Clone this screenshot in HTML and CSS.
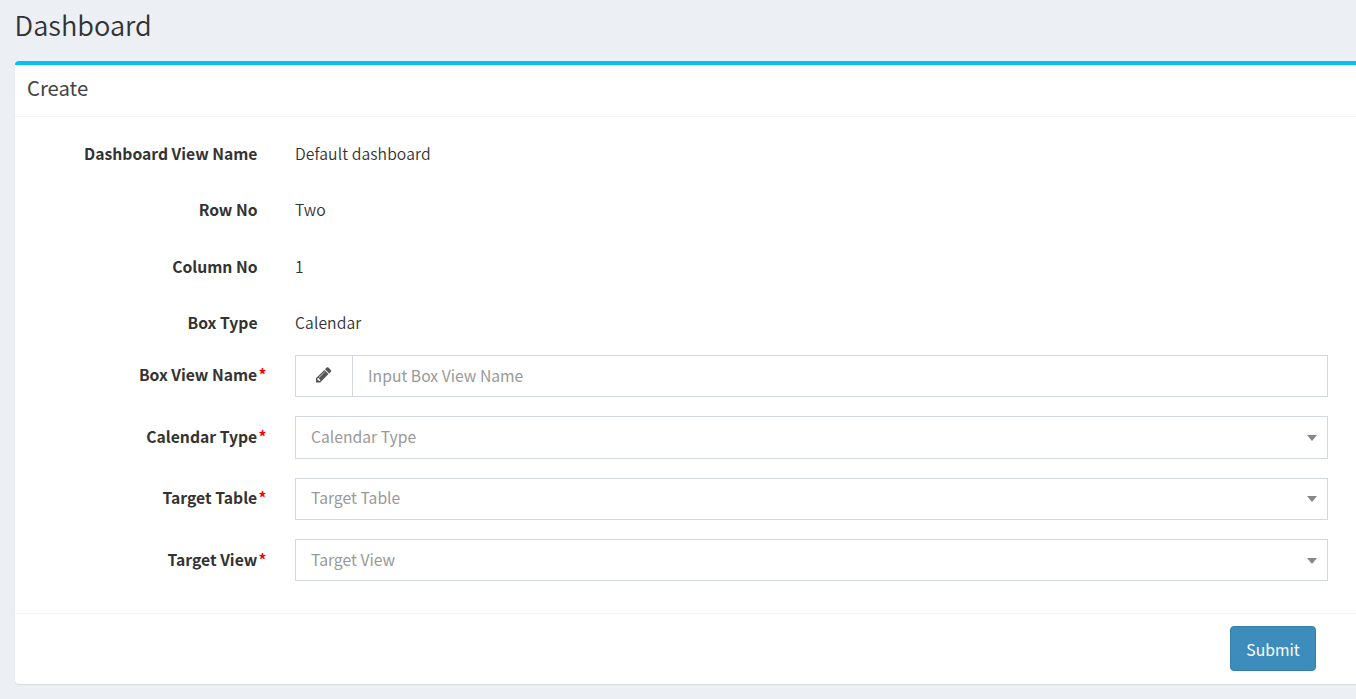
FILE: index.html
```html
<!DOCTYPE html>
<html lang="en">
<head>
<meta charset="utf-8">
<title>Dashboard</title>
<link rel="stylesheet" href="styles.css">
</head>
<body>
<h1 class="page-title">Dashboard</h1>
<main class="box">
  <header class="box-header"><h2 class="box-title">Create</h2></header>
  <form class="form">
    <div class="row static"><span class="label">Dashboard View Name</span><span class="value">Default dashboard</span></div>
    <div class="row static"><span class="label">Row No</span><span class="value">Two</span></div>
    <div class="row static"><span class="label">Column No</span><span class="value">1</span></div>
    <div class="row static"><span class="label">Box Type</span><span class="value">Calendar</span></div>
    <div class="row field">
      <label class="label required" for="name">Box View Name</label>
      <div class="group">
        <span class="addon"><svg class="pencil" viewBox="0 0 1536 1536"><path fill="currentColor" d="M363 1408l91-91-235-235-91 91v107h128v128zM886 480q0-22-22-22-10 0-17 7l-542 542q-7 7-7 17 0 22 22 22 10 0 17-7l542-542q7-7 7-17zM832 288l416 416-832 832H0v-416zM1515 384q0 53-37 90l-166 166-416-416 166-165q36-38 90-38 53 0 91 38l235 234q37 39 37 91z"/></svg></span>
        <input class="input" id="name" type="text" placeholder="Input Box View Name">
      </div>
    </div>
    <div class="row field lower">
      <span class="label required">Calendar Type</span>
      <div class="select tall"><span>Calendar Type</span><i class="caret"></i></div>
    </div>
    <div class="row field">
      <span class="label required">Target Table</span>
      <div class="select"><span>Target Table</span><i class="caret"></i></div>
    </div>
    <div class="row field lower">
      <span class="label required">Target View</span>
      <div class="select"><span>Target View</span><i class="caret"></i></div>
    </div>
  </form>
  <footer class="box-footer"><button class="submit" type="button">Submit</button></footer>
</main>
</body>
</html>
```

FILE: styles.css
```css
* { box-sizing: border-box; }
body {
  margin: 0;
  height: 699px;
  padding-left: 15px;
  overflow: hidden;
  background: #ecf0f5;
  color: #333;
  font: 15.7px/25px "Source Sans Pro", "Noto Sans CJK JP", sans-serif;
}
.page-title {
  margin: 0 0 0 -0.4px;
  height: 61px;
  padding-top: 5px;
  font-size: 27.2px;
  line-height: 38px;
  font-weight: 350;
}
.box {
  width: 1360px;
  height: 623px;
  background: #fff;
  border-top: 4px solid #00c0ef;
  border-radius: 4px;
  box-shadow: 0 1px 1px rgba(0, 0, 0, .1);
}
.box-header {
  height: 52px;
  padding: 9px 12px;
  border-bottom: 1px solid #f4f4f4;
}
.box-title {
  margin: 0;
  font-size: 20.3px;
  line-height: 27px;
  font-weight: 400;
  color: #444;
}
.form {
  height: 496px;
  padding-top: 24px;
}
.row {
  display: grid;
  grid-template-columns: 242.5px 1033px;
  column-gap: 37.5px;
}
.static { height: 56.4px; }
.field {
  height: 61.4px;
  align-items: start;
}
.field:nth-child(5) { margin-top: -11.6px; }
.label {
  text-align: right;
  font-weight: 700;
}
.value {
  font-weight: 350;
  letter-spacing: .1px;
}
.field .label { padding-top: 7px; }
.lower .label { padding-top: 8px; }
.required::after {
  content: "*";
  margin: 0 -9px 0 1.3px;
  color: #f00;
}
.group, .select {
  display: flex;
  height: 42px;
  border: 1px solid #d2d6de;
}
.select {
  align-items: flex-start;
  justify-content: space-between;
  padding: 6px 10px 0 15px;
  color: #999;
}
.lower .select { padding-top: 7px; }
.tall { height: 43px; }
.addon {
  display: flex;
  align-items: center;
  justify-content: center;
  width: 57px;
  padding: 0 0 2px;
  border-right: 1px solid #d2d6de;
  color: #555;
}
.pencil {
  width: 15.4px;
  height: 15.4px;
}
.input {
  flex: 1;
  padding: 0 15px;
  border: 0;
  outline: 0;
  background: transparent;
  font: inherit;
}
.input::placeholder { color: #999; }
.caret {
  margin-top: 11px;
  border: 5px solid transparent;
  border-top: 6px solid #888;
  border-bottom: 0;
}
.box-footer {
  display: flex;
  justify-content: flex-end;
  height: 71px;
  padding: 12px 59px 0 12px;
  border-top: 1px solid #f4f4f4;
}
.submit {
  width: 86px;
  height: 45px;
  padding: 2px 0 0;
  border: 1px solid #367fa9;
  border-radius: 4px;
  background: #3c8dbc;
  color: #fff;
  font: inherit;
}
```
